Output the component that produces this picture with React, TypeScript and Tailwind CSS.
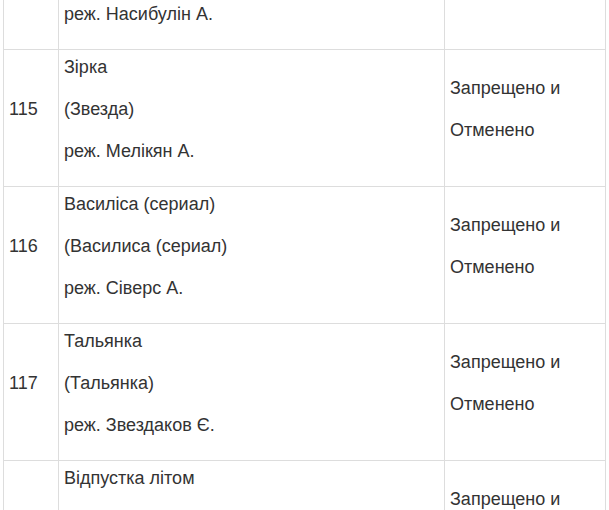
const rows = [
  { n: '114', lines: ['Осінь', '(Осень)', 'реж. Насибулін А.'] },
  { n: '115', lines: ['Зірка', '(Звезда)', 'реж. Мелікян А.'] },
  { n: '116', lines: ['Василіса (сериал)', '(Василиса (сериал)', 'реж. Сіверс А.'] },
  { n: '117', lines: ['Тальянка', '(Тальянка)', 'реж. Звездаков Є.'] },
  { n: '118', lines: ['Відпустка літом', '(Отпуск летом)', 'реж. Бобров С.'] },
];

export default function App() {
  return (
    <div className="h-[510px] overflow-hidden bg-white pl-[3px] text-[18px] text-[#333] font-['Liberation_Sans',Arial,sans-serif]">
      <table className="-mt-[88px] w-[603px] table-fixed border-collapse">
        <colgroup>
          <col className="w-[55px]" />
          <col className="w-[386px]" />
          <col />
        </colgroup>
        <tbody>
          {rows.map((row) => (
            <tr key={row.n}>
              <td className="border border-[#ddd] p-[5px] align-middle">
                <p className="mb-[18px] leading-6">{row.n}</p>
              </td>
              <td className="border border-[#ddd] p-[5px] align-middle">
                {row.lines.map((line) => (
                  <p key={line} className="mb-[18px] leading-6">
                    {line}
                  </p>
                ))}
              </td>
              <td className="border border-[#ddd] p-[5px] align-middle">
                <p className="mb-[18px] leading-6">Запрещено и</p>
                <p className="mb-[18px] leading-6">Отменено</p>
              </td>
            </tr>
          ))}
        </tbody>
      </table>
    </div>
  );
}
